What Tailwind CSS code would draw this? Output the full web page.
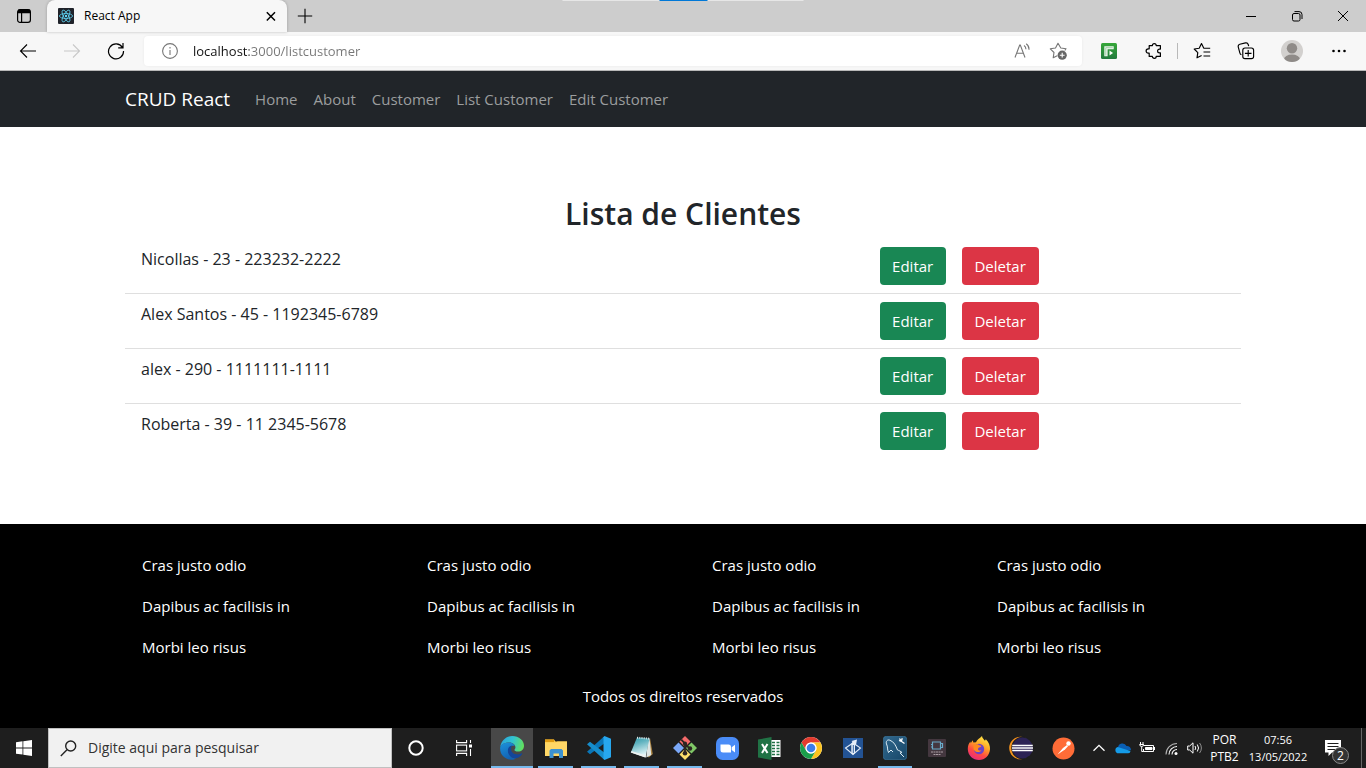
<!DOCTYPE html>
<html lang="pt-BR">
<head>
<meta charset="utf-8">
<meta name="viewport" content="width=device-width, initial-scale=1">
<title>React App</title>
<script src="https://cdn.jsdelivr.net/npm/@tailwindcss/browser@4"></script>
</head>
<body class="flex min-h-screen flex-col bg-white font-['Open_Sans','Noto_Sans',sans-serif] text-[15px] leading-6 text-[#212529]">

<!-- Browser tab strip -->
<header>
  <div class="relative flex h-8 items-stretch bg-[#cdcdcd]">
    <div class="absolute top-0 left-1/2 flex h-px w-[241px] -translate-x-1/2 justify-center bg-[#e6e6e6]"><span class="w-12 bg-[#0078d7]"></span></div>
    <button type="button" aria-label="Menu de guias" class="grid w-[47px] place-items-center">
      <svg class="size-4" viewBox="0 0 16 16" fill="none" stroke="#000" stroke-width="1.2"><rect x="1.6" y="1.6" width="12.8" height="12.8" rx="2.4"/><path d="M2 3.4h12M2 4.6h12M5.6 5v9" /><path d="M2 2.6h12" stroke-width="2"/></svg>
    </button>
    <div class="flex w-60 items-center rounded-t-lg bg-[#f7f7f7] pr-2 pl-[11px] shadow-[0_0_3px_rgba(0,0,0,0.25)]">
      <svg class="size-4 shrink-0" viewBox="0 0 16 16"><rect width="16" height="16" rx="1" fill="#20232a"/><g fill="none" stroke="#61dafb" stroke-width=".75"><ellipse cx="8" cy="8" rx="6.6" ry="2.5"/><ellipse cx="8" cy="8" rx="6.6" ry="2.5" transform="rotate(60 8 8)"/><ellipse cx="8" cy="8" rx="6.6" ry="2.5" transform="rotate(120 8 8)"/></g><circle cx="8" cy="8" r="1.2" fill="#61dafb"/></svg>
      <span class="ml-2.5 flex-1 text-[12px] text-black">React App</span>
      <button type="button" aria-label="Fechar guia" class="grid size-4 place-items-center"><svg class="size-4" viewBox="0 0 16 16" fill="none" stroke="#000" stroke-width="1.5"><path d="M3.8 4.3l8.2 8.2M12 4.3l-8.2 8.2"/></svg></button>
    </div>
    <button type="button" aria-label="Nova guia" class="grid w-9 place-items-center"><svg class="size-4" viewBox="0 0 16 16" fill="none" stroke="#000" stroke-width="1.1"><path d="M.8 8h14.4M8 .8v14.4"/></svg></button>
    <div class="ml-auto flex">
      <button type="button" aria-label="Minimizar" class="grid w-[46px] place-items-center"><svg class="size-3" viewBox="0 0 12 12" stroke="#000"><path d="M1 6.5h10"/></svg></button>
      <button type="button" aria-label="Restaurar" class="grid w-[46px] place-items-center"><svg class="size-3" viewBox="0 0 12 12" fill="none" stroke="#000"><rect x="1.5" y="3.5" width="7.5" height="7.5" rx="1.5"/><path d="M3.5 1.6h4.5a3 3 0 0 1 3 3v4.4"/></svg></button>
      <button type="button" aria-label="Fechar" class="grid w-[46px] place-items-center"><svg class="size-3" viewBox="0 0 12 12" stroke="#000"><path d="M1 1l10 10M11 1L1 11"/></svg></button>
    </div>
  </div>

  <!-- Browser toolbar -->
  <div class="flex h-[39px] items-center border-b border-[#b8b8b8] bg-[#f7f7f7]">
    <button type="button" aria-label="Voltar" class="ml-1.5 grid w-11 place-items-center"><svg class="size-[18px]" viewBox="0 0 18 18" fill="none" stroke="#000" stroke-width="1.1"><path d="M17 9H1.5M8 2.5L1.5 9 8 15.5"/></svg></button>
    <button type="button" aria-label="Avançar" disabled class="grid w-11 place-items-center"><svg class="size-[18px]" viewBox="0 0 18 18" fill="none" stroke="#c8c8c8" stroke-width="1.1"><path d="M1 9h15.500M10 2.500L16.500 9 10 15.500"/></svg></button>
    <button type="button" aria-label="Atualizar" class="grid w-11 place-items-center"><svg class="size-[18px]" viewBox="0 0 18 18" fill="none" stroke="#000" stroke-width="1.200"><path d="M15.400 5.500A7.500 7.500 0 1 0 16.500 9M16 1v4.800h-4.800"/></svg></button>
    <div class="ml-1.5 flex h-[30px] flex-1 items-center rounded bg-white shadow-[0_0_3px_rgba(0,0,0,0.06)]">
      <button type="button" aria-label="Informações do site" class="ml-[18px] grid size-4 place-items-center"><svg class="size-4" viewBox="0 0 16 16" fill="none" stroke="#767676" stroke-width="1.100"><circle cx="8" cy="8" r="7.400"/><path d="M8 7v5M8 4v1.500"/></svg></button>
      <input type="text" aria-label="Endereço" value="localhost:3000/listcustomer" class="ml-[15px] h-6 min-w-0 flex-1 bg-[linear-gradient(90deg,#111_56px,#767676_56px)] bg-clip-text text-[13px] text-transparent outline-none">
      <button type="button" aria-label="Ler em voz alta" class="grid w-9 place-items-center"><svg class="size-[18px]" viewBox="0 0 18 18" fill="none" stroke="#767676" stroke-width="1.100"><path d="M2 15.500L6.700 3h.6L12 15.500M3.600 11.300h6.800M11 3.500q2 1.200 1.900 3.800M13.200 1.800q3.100 2.200 2.800 6"/></svg></button>
      <button type="button" aria-label="Adicionar aos favoritos" class="mr-1.5 grid w-9 place-items-center"><svg class="size-[18px]" viewBox="0 0 18 18" fill="none" stroke="#767676" stroke-width="1.100" stroke-linejoin="round"><path d="M15.800 8.500l1.200-1.700-5.200-.8L9 1.300 6.500 6l-5.200.8L5 10.500l-.8 5.300 4-2.100"/><circle cx="13.200" cy="13.200" r="4.600" fill="#666" stroke="none"/><path d="M13.200 10.800v4.800M10.800 13.200h4.800" stroke="#fff"/></svg></button>
    </div>
    <div class="ml-1 flex items-center">
      <button type="button" aria-label="Extensão" class="grid w-[46px] place-items-center"><svg class="size-4" viewBox="0 0 16 16"><defs><linearGradient id="ext" x2="0" y2="1"><stop stop-color="#36a839"/><stop offset="1" stop-color="#237a3e"/></linearGradient></defs><rect width="16" height="16" rx="1.500" fill="url(#ext)"/><path d="M3.300 3.300h9.400v2.900H6.600v7H3.300z" fill="#eef7ef"/><path d="M4.800 12.500V4.700h7" fill="none" stroke="#8cc795" stroke-width=".8"/><path d="M8.500 7.600v5l3.600-2.500z" fill="#fff"/></svg></button>
      <button type="button" aria-label="Extensões" class="grid w-[43px] place-items-center"><svg class="size-[18px]" viewBox="0 0 18 18" fill="none" stroke="#000" stroke-width="1.200" stroke-linejoin="round"><path d="M4.200 3.600H7.400a1.900 1.900 0 0 1 3.800 0H15.400v3.500h-.9a1.900 1.900 0 0 0 0 3.800h.9v3.500H11.200a1.900 1.900 0 0 1-3.800 0H4.200v-3.200h-.9a2.200 2.200 0 0 1 0-4.400h.9z"/></svg></button>
      <span class="mx-0.5 h-4 w-px bg-[#b9b9b9]"></span>
      <button type="button" aria-label="Favoritos" class="grid w-11 place-items-center"><svg class="size-[18px]" viewBox="0 0 18 18" fill="none" stroke="#000" stroke-width="1.150" stroke-linejoin="round"><path d="M10.800 6.200L8.500 1.500 6.200 6.200l-5 .8 3.600 3.600-.8 5.200 4.600-2.300M10.500 6.200h6.700M10.500 10h6.700M10.500 14h6.700"/></svg></button>
      <button type="button" aria-label="Coleções" class="grid w-11 place-items-center"><svg class="size-[18px]" viewBox="0 0 18 18" fill="none" stroke="#000" stroke-width="1.150"><path d="M4.400 12.800A2.300 2.300 0 0 1 2.900 11L1.300 5.100A2.200 2.200 0 0 1 2.800 2.300L8.500.900a2.300 2.300 0 0 1 2.700 1.600l.5 1.700"/><rect x="5.800" y="6" width="10.800" height="10.600" rx="2.200"/><path d="M11.200 8v6.600M7.900 11.300h6.600"/></svg></button>
      <button type="button" aria-label="Perfil" class="grid w-12 place-items-center"><svg class="size-[22px]" viewBox="0 0 22 22"><defs><clipPath id="av"><circle cx="11" cy="11" r="11"/></clipPath></defs><g clip-path="url(#av)"><rect width="22" height="22" fill="#d2d0ce"/><circle cx="11" cy="8.200" r="5.200" fill="#8f8b88"/><ellipse cx="11" cy="19.500" rx="8" ry="5" fill="#8f8b88"/></g></svg></button>
      <button type="button" aria-label="Mais opções" class="mr-[5px] grid w-[45px] place-items-center"><svg class="size-4" viewBox="0 0 16 16"><g fill="#000"><circle cx="2.500" cy="8" r="1.300"/><circle cx="8" cy="8" r="1.300"/><circle cx="13.500" cy="8" r="1.300"/></g></svg></button>
    </div>
  </div>
</header>

<!-- Site navigation -->
<nav class="bg-[#212529]">
  <div class="mx-auto flex h-14 w-full max-w-[1140px] items-center px-3">
    <a href="#" class="mr-[25px] text-[19px] text-white">CRUD React</a>
    <div class="flex gap-4 text-[#9b9d9e]">
      <a href="#">Home</a>
      <a href="#">About</a>
      <a href="#">Customer</a>
      <a href="#">List Customer</a>
      <a href="#">Edit Customer</a>
    </div>
  </div>
</nav>

<main class="mx-auto w-full max-w-[1140px] flex-1 px-3 pt-[67px]">
  <h2 class="mb-[5px] text-center text-[30px] leading-10 font-semibold">Lista de Clientes</h2>
  <ul class="divide-y divide-[#dfdfdf]">
    <li class="px-4 py-2"><div class="-mx-3 grid grid-cols-3"><p class="col-span-2 px-3 text-[16px]">Nicollas - 23 - 223232-2222</p><div class="flex gap-4 px-3"><button type="button" class="h-[38px] w-[66px] rounded bg-[#198754] text-white">Editar</button><button type="button" class="h-[38px] w-[77px] rounded bg-[#dc3545] text-white">Deletar</button></div></div></li>
    <li class="px-4 py-2"><div class="-mx-3 grid grid-cols-3"><p class="col-span-2 px-3 text-[16px]">Alex Santos - 45 - 1192345-6789</p><div class="flex gap-4 px-3"><button type="button" class="h-[38px] w-[66px] rounded bg-[#198754] text-white">Editar</button><button type="button" class="h-[38px] w-[77px] rounded bg-[#dc3545] text-white">Deletar</button></div></div></li>
    <li class="px-4 py-2"><div class="-mx-3 grid grid-cols-3"><p class="col-span-2 px-3 text-[16px]">alex - 290 - 1111111-1111</p><div class="flex gap-4 px-3"><button type="button" class="h-[38px] w-[66px] rounded bg-[#198754] text-white">Editar</button><button type="button" class="h-[38px] w-[77px] rounded bg-[#dc3545] text-white">Deletar</button></div></div></li>
    <li class="px-4 py-2"><div class="-mx-3 grid grid-cols-3"><p class="col-span-2 px-3 text-[16px]">Roberta - 39 - 11 2345-5678</p><div class="flex gap-4 px-3"><button type="button" class="h-[38px] w-[66px] rounded bg-[#198754] text-white">Editar</button><button type="button" class="h-[38px] w-[77px] rounded bg-[#dc3545] text-white">Deletar</button></div></div></li>
  </ul>
</main>

<footer class="bg-black pt-[21px] pb-5 text-white">
  <div class="mx-auto grid w-full max-w-[1140px] grid-cols-4">
    <ul class="pl-[29px]"><li class="h-[41px] py-2">Cras justo odio</li><li class="h-[41px] py-2">Dapibus ac facilisis in</li><li class="h-[41px] py-2">Morbi leo risus</li></ul>
    <ul class="pl-[29px]"><li class="h-[41px] py-2">Cras justo odio</li><li class="h-[41px] py-2">Dapibus ac facilisis in</li><li class="h-[41px] py-2">Morbi leo risus</li></ul>
    <ul class="pl-[29px]"><li class="h-[41px] py-2">Cras justo odio</li><li class="h-[41px] py-2">Dapibus ac facilisis in</li><li class="h-[41px] py-2">Morbi leo risus</li></ul>
    <ul class="pl-[29px]"><li class="h-[41px] py-2">Cras justo odio</li><li class="h-[41px] py-2">Dapibus ac facilisis in</li><li class="h-[41px] py-2">Morbi leo risus</li></ul>
  </div>
  <p class="mt-4 text-center">Todos os direitos reservados</p>
</footer>

<!-- Desktop taskbar -->
<div class="flex h-10 items-stretch bg-[#1e1e1e] text-white">
  <button type="button" aria-label="Iniciar" class="grid w-12 place-items-center"><svg class="size-4" viewBox="0 0 16 16" fill="#fff"><path d="M0 2.200l6.500-.9v6.200H0zM7.300 1.200L16 0v7.500H7.300zM0 8.400h6.500v6.200L0 13.700zM7.300 8.400H16V16l-8.700-1.200z"/></svg></button>
  <label class="flex w-[344px] items-center border border-[#c0c0c0] bg-[#f1f1f1] pl-[11px]">
    <svg class="size-[17px]" viewBox="0 0 17 17" fill="none" stroke="#222" stroke-width="1.400"><circle cx="10.700" cy="6" r="5"/><path d="M7 9.700L.8 15.900"/></svg>
    <input type="text" aria-label="Pesquisar" placeholder="Digite aqui para pesquisar" class="ml-[11px] min-w-0 flex-1 bg-transparent text-[14px] outline-none placeholder:text-[#333]">
  </label>
  <button type="button" aria-label="Cortana" class="grid w-12 place-items-center"><svg class="size-4" viewBox="0 0 16 16" fill="none" stroke="#fff" stroke-width="2"><circle cx="8" cy="8" r="6.700"/></svg></button>
  <button type="button" aria-label="Visão de tarefas" class="mr-[3px] grid w-12 place-items-center"><svg class="size-4" viewBox="0 0 16 16" fill="none" stroke="#fff" stroke-width="1.100"><path d="M.6 0v2.600h10V0M.6 16v-2.600h10V16M14.500 0v3M14.500 9v7"/><rect x=".6" y="5.100" width="10" height="5.800"/><path d="M13 4.500h3v3h-3z" fill="#fff" stroke="none"/></svg></button>

  <button type="button" aria-label="Microsoft Edge" class="mr-px grid w-[42px] place-items-center border-b-2 border-[#76b9ed] bg-[#484848] pt-0.5"><svg class="size-6" viewBox="0 0 24 24"><defs><linearGradient id="e1" x1="0" x2="1" y1=".3" y2=".5"><stop stop-color="#2ba4dc"/><stop offset=".5" stop-color="#32c3d1"/><stop offset="1" stop-color="#62e05d"/></linearGradient><linearGradient id="e2" y2="1" x2=".4"><stop stop-color="#1c93dc"/><stop offset="1" stop-color="#1262b3"/></linearGradient></defs><path d="M.2 11.300C1 4.700 6 0 12.300 0 19 0 24 4.500 24 9.700c0 3.500-2.600 5.900-6 5.900-2.500 0-4-.9-3.500-1.900 2.600-2.900-.4-7.200-5-7.200-4.800 0-8.500 2-9.300 4.800z" fill="url(#e1)"/><path d="M.1 12.300C.1 8.600 4.300 6.500 9.200 6.500c2.500 0 4.800 1.500 5.600 3.500-3.200-1.100-6.300 1.200-6.300 5 0 4.500 3.800 7.700 7.700 7.400-5.600 3.500-16.100 0-16.100-10.100z" fill="url(#e2)"/><path d="M12 9.500c-3.500.4-5.300 4.500-3.300 8.500 2.500 5 9.400 6.300 13.300.3.500-.8 0-1.200-.8-.8-3.700 2-10.100.8-10.100-4.500 0-1.500.5-2.600.9-3.500z" fill="#13469a"/></svg></button>
  <button type="button" aria-label="Explorador de Arquivos" class="relative grid w-[43px] place-items-center"><svg class="h-5 w-[22px]" viewBox="0 0 22 20"><path d="M0 1.500h9l1.500 2H22V18H0z" fill="#ffcb45"/><path d="M0 1.500h9V4H0z" fill="#e09b12"/><path d="M0 4.500h11l1.500-1H22V18H0z" fill="#ffd766"/><path d="M4.500 20v-7.500L6 11h10.500l1.500 1.500V20h-4v-4.500h-5.500V20z" fill="#3c91cf"/></svg><span class="absolute inset-x-1 bottom-0 h-0.5 bg-[#76b9ed]"></span></button>
  <button type="button" aria-label="Visual Studio Code" class="relative grid w-[43px] place-items-center"><svg class="size-6" viewBox="0 0 24 24"><path d="M17.500 0v7.200L3 18.200 0 15.800z" fill="#0a76b8"/><path d="M0 8.300l3-2.500 14.500 11V24z" fill="#168dcc"/><path d="M17.500 0L24 2.800v18.400L17.500 24l-1-1.200V1.200z" fill="#27a7ee"/></svg><span class="absolute inset-x-1 bottom-0 h-0.5 bg-[#76b9ed]"></span></button>
  <button type="button" aria-label="Bloco de Notas" class="relative grid w-[43px] place-items-center"><svg class="size-6" viewBox="0 0 24 24"><defs><linearGradient id="np" y2="1" x2=".3"><stop stop-color="#2d97a8"/><stop offset=".35" stop-color="#5fb2bf"/><stop offset="1" stop-color="#e6f6f8"/></linearGradient></defs><path d="M20 2l2.800 16-4 3.500L17 19z" fill="#a8803f"/><path d="M19.500 2l1.800 17-5 2.500L18 5z" fill="#dfe5e3"/><path d="M7 1.500L19.500 2.500 15.500 21.500.8 16.500z" fill="url(#np)"/><path d="M7.500.800v2M9.800.900v2M12 1v2M14.200 1.200v2M16.400 1.400v2M18.600 1.600v2" stroke="#d9e4e6" stroke-width="1"/><path d="M.8 16.500l14.700 5 .5-2L1.500 15z" fill="#eef1f0"/></svg><span class="absolute inset-x-1 bottom-0 h-0.5 bg-[#76b9ed]"></span></button>
  <button type="button" aria-label="Git" class="relative grid w-[43px] place-items-center"><svg class="size-6" viewBox="0 0 24 24"><path d="M12 0l5.500 5.500L12 11 6.500 5.500z" fill="#f56b6b"/><path d="M18.500 6.500L24 12l-5.500 5.500L13 12z" fill="#80c867"/><path d="M5.500 6.500L11 12l-5.500 5.500L0 12z" fill="#7ba8f8"/><path d="M12 13l5.500 5.500L12 24l-5.500-5.500z" fill="#ffe06b"/><path d="M8.300 3.700L12 7.600V17M12 8l4.500 4.300" stroke="#2c2522" stroke-width="1.800" fill="none"/><g fill="#2c2522"><circle cx="12" cy="7.700" r="2.100"/><circle cx="12" cy="17.300" r="2.300"/><circle cx="17" cy="12.500" r="2.200"/></g></svg><span class="absolute inset-x-1 bottom-0 h-0.5 bg-[#76b9ed]"></span></button>
  <button type="button" aria-label="Zoom" class="grid w-[42px] place-items-center"><svg class="size-[23px]" viewBox="0 0 23 23"><rect width="23" height="23" rx="6.500" fill="#4a8cf7"/><path d="M4.500 7.500h8a2.500 2.500 0 0 1 2.500 2.500v5.500H7A2.500 2.500 0 0 1 4.500 13zM15.700 10.200L19 7.800v7.600l-3.300-2.300z" fill="#fff"/></svg></button>
  <button type="button" aria-label="Excel" class="grid w-[42px] place-items-center"><svg class="size-[23px]" viewBox="0 0 23 23"><path d="M12 3h10.500v17H12z" fill="#fff"/><path d="M14 5.500h3M18.500 5.500h3M14 8.500h3M18.500 8.500h3M14 11.500h3M18.500 11.500h3M14 14.500h3M18.500 14.500h3M14 17.500h3M18.500 17.500h3" stroke="#207245" stroke-width="1.500"/><path d="M0 2.600L13.500 0v23L0 20.400z" fill="#207245"/><path d="M4 7l5.500 9M9.500 7L4 16" stroke="#fff" stroke-width="2"/></svg></button>
  <button type="button" aria-label="Google Chrome" class="grid w-[42px] place-items-center"><svg class="size-6" viewBox="0 0 24 24"><circle cx="12" cy="12" r="11" fill="#fff"/><path d="M2.500 6.500A11 11 0 0 1 21.500 6.500H12a5.500 5.500 0 0 0-4.800 8.200z" fill="#e33b2e"/><path d="M21.500 6.500A11 11 0 0 1 12 23l4.800-8.300A5.500 5.500 0 0 0 12 6.500z" fill="#fcc31e"/><path d="M12 23A11 11 0 0 1 2.500 6.500l4.700 8.200a5.500 5.500 0 0 0 9.600 0z" fill="#1a9e4b"/><circle cx="12" cy="12" r="5.500" fill="#fff"/><circle cx="12" cy="12" r="4.300" fill="#3b7de9"/></svg></button>
  <button type="button" aria-label="Editor de diagramas" class="grid w-[42px] place-items-center"><svg class="size-5" viewBox="0 0 20 20"><path d="M0 0h20v20H0z" fill="#235394"/><path d="M2.500 10L10 5l7.500 5-7.500 6.500z" fill="#1f4b85" stroke="#dfe9f5" stroke-width="1.100"/><path d="M8.300 5.500L9.500 4 8.500 3 14 1.500 13 7l-1-1v9l-2 1.800-1.700-1.500z" fill="#e6eef8"/><path d="M10.300 7v8" stroke="#235394" stroke-width=".9"/></svg></button>
  <button type="button" aria-label="MySQL Workbench" class="relative grid w-[42px] place-items-center"><svg class="size-6" viewBox="0 0 24 24"><defs><linearGradient id="my" y2="1"><stop stop-color="#31688e"/><stop offset="1" stop-color="#174768"/></linearGradient></defs><rect x=".3" y=".3" width="23.400" height="23.400" rx="3" fill="url(#my)" stroke="#3c7ba2" stroke-width=".6"/><path d="M5.500 16.500C4 13 5 11 3.500 8 2.500 5.500 4.500 3 7 4.300c4 1.300 6 5.700 7.500 9.700 1.500.5 3.500 1.500 4.500 2.500l-2 .5c1 1.500 3 2.500 4 4M5.500 16.500L8 14l2 2" fill="none" stroke="#dcebf3" stroke-width="1"/><path d="M16.500 2.500l1.800 2.800M21.500 7.500l-3.200-2.200 1-3M18.300 5.300l-2.300-.8" stroke="#fff" stroke-width="1.300" fill="none"/></svg><span class="absolute inset-x-1 bottom-0 h-0.5 bg-[#76b9ed]"></span></button>
  <button type="button" aria-label="Ferramenta de captura" class="grid w-[42px] place-items-center"><svg class="size-[18px]" viewBox="0 0 18 18"><rect width="18" height="18" rx="1" fill="#44373f"/><path d="M4.500 3h8v7h-8zM12.500 4.500h2v4h-2M3 5.500h1.500M3 8h1.500" fill="none" stroke="#69a9c8" stroke-width="1.200"/><path d="M3 13h12M5.500 15.500h7" stroke="#a99da3" stroke-width="1" stroke-dasharray="2 .5"/></svg></button>
  <button type="button" aria-label="Firefox" class="grid w-[42px] place-items-center"><svg class="size-6" viewBox="0 0 24 24"><defs><linearGradient id="ff" x1=".8" y1="0" x2=".3" y2="1"><stop stop-color="#fff14a"/><stop offset=".4" stop-color="#ffa526"/><stop offset=".7" stop-color="#ff4a43"/><stop offset="1" stop-color="#e62a80"/></linearGradient></defs><path d="M15 0c.2 2 1.800 3.400 3 4.800l.8-1.600c3 3 4.500 6.500 4.200 10C22.500 19.500 18 24 12 24S.8 19.500.8 13c0-3 .9-5.600 2.700-7.500l.2 1.700 2-2.900.7 2.200 2.600-.2C10 3.500 12.500 2.500 15 0z" fill="url(#ff)"/><circle cx="12" cy="13" r="5.200" fill="#6c43c7"/><path d="M6.500 8.500l4.500-.3c.7 1.500 3.500.8 3.300 2.100-.2 1.100-2.800 1-3.300 2.400-.4 1.400 1.600 2.500 3.500 1.500-1.300 2.600-6 2.500-8-.7z" fill="#ff8a1f"/></svg></button>
  <button type="button" aria-label="Eclipse" class="grid w-[42px] place-items-center"><svg class="size-6" viewBox="0 0 24 24"><circle cx="11.500" cy="12" r="11.300" fill="#f7941e"/><circle cx="13.500" cy="12" r="11.200" fill="#1e1e1e"/><circle cx="13.500" cy="12" r="10.400" fill="#2c2255"/><path d="M3.200 9.500h20.600M3 12h21M3.200 14.500h20.600" stroke="#fff" stroke-width="1.400"/></svg></button>
  <button type="button" aria-label="Postman" class="grid w-[42px] place-items-center"><svg class="size-[23px]" viewBox="0 0 23 23"><circle cx="11.500" cy="11.500" r="11" fill="#ff6c37"/><path d="M5.500 17.500l5.500-6.500 4-3 1 1.200-3 3.300z" fill="#fff"/><circle cx="16.500" cy="6.500" r="2.200" fill="#fff"/></svg></button>

  <!-- System tray -->
  <div class="ml-auto flex items-stretch">
    <button type="button" aria-label="Mostrar ícones ocultos" class="grid w-6 place-items-center"><svg class="size-3" viewBox="0 0 12 12" fill="none" stroke="#fff" stroke-width="1.300"><path d="M.5 8.800L6 3.300l5.500 5.500"/></svg></button>
    <button type="button" aria-label="OneDrive" class="grid w-6 place-items-center"><svg class="h-3 w-4" viewBox="0 0 16 12"><path d="M3 5.500a4.500 4.500 0 0 1 8.500-1.500A4 4 0 0 1 16 8.200L8 8z" fill="#0a5eb3"/><path d="M2.800 5L15.500 9a2.500 2.500 0 0 1-2.300 2.300H3.500A3.200 3.200 0 0 1 2.800 5z" fill="#159be8"/></svg></button>
    <button type="button" aria-label="Bateria" class="grid w-6 place-items-center"><svg class="h-3 w-4" viewBox="0 0 16 12" fill="none" stroke="#fff"><path d="M5 3.500h9.500v6h-10V7M15.500 5v3M1.500 0v2M4 0v2M.5 2.500h4.300M1 2.500v1.300q1.700 1.500 3.400 0V2.500M2.700 4.500v5h2"/><path d="M6.500 5.500H13v2H6.500z" fill="#fff"/></svg></button>
    <button type="button" aria-label="Rede sem fio" class="grid w-6 place-items-center"><svg class="size-3.5" viewBox="0 0 14 14" fill="none" stroke="#fff" stroke-width="1.100"><path d="M2 13.500A11 11 0 0 1 13 2.500" opacity=".65"/><path d="M5 13.500a8 8 0 0 1 8-8M8 13.500a5 5 0 0 1 5-5"/><circle cx="12" cy="12.500" r="1.500" fill="#fff" stroke="none"/></svg></button>
    <button type="button" aria-label="Volume" class="grid w-6 place-items-center"><svg class="size-4" viewBox="0 0 16 16" fill="none" stroke="#fff"><path d="M.7 6h2L6 2.800v10.400L2.700 10h-2zM8 6q1.500 2 0 4M10.300 4.500q2.500 3.500 0 7"/><path d="M12.600 3q3.600 5 0 10" opacity=".5"/></svg></button>
    <button type="button" class="w-[35px] text-center text-[12px] leading-[17px]">POR<br>PTB2</button>
    <button type="button" class="w-[72px] text-center text-[11px] leading-[17px]">07:56<br>13/05/2022</button>
    <button type="button" aria-label="Notificações, 2 novas" class="relative grid w-[47px] place-items-center pr-2.5"><svg class="size-4" viewBox="0 0 16 16"><path d="M0 0h16v12.500H7L3.500 16v-3.500H0z" fill="#fff"/><path d="M2.500 3.500h11M2.500 6.500h11M2.500 9.500h8" stroke="#1e1e1e"/></svg><span class="absolute right-3 bottom-1 grid size-[17px] place-items-center rounded-full border border-[#8a8a8a] bg-[#333] text-[12px] leading-none">2</span></button>
    <span class="w-[5px] border-l border-[#666]"></span>
  </div>
</div>
</body>
</html>
